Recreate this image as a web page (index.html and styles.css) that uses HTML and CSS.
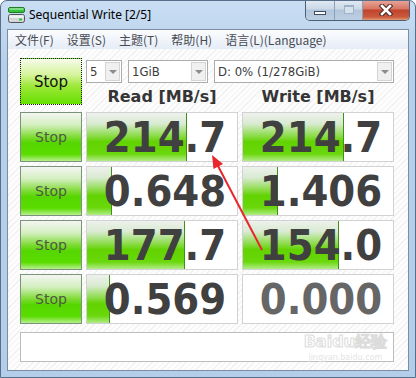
FILE: index.html
```html
<!DOCTYPE html>
<html lang="zh">
<head>
    <meta charset="UTF-8">
    <title>Sequential Write [2/5]</title>
    <link rel="stylesheet" href="styles.css">
</head>
<body>
    <div class="window">
        <div class="titlebar">
            <svg class="app-icon" width="17" height="16" viewBox="0 0 17 16">
                <rect x="0.5" y="0.5" width="16" height="5" rx="1.5" fill="#38c23c" stroke="#1f7d24"/>
                <rect x="1.5" y="1.2" width="14" height="1.6" fill="#8fe59a"/>
                <rect x="0.5" y="7.5" width="16" height="8" rx="2" fill="#d4d6d8" stroke="#4d5257"/>
                <rect x="1.5" y="8.3" width="14" height="2.5" fill="#f2f3f4"/>
                <rect x="11" y="11.5" width="3" height="2" fill="#2fc235"/>
            </svg>
            <span class="title">Sequential Write [2/5]</span>
            <div class="caption-buttons">
                <span class="cap cap-min"><i></i></span>
                <span class="cap cap-max"><i></i></span>
                <span class="cap cap-close">
                    <svg width="14" height="12" viewBox="0 0 14 12">
                        <path d="M3 2 L11 10 M11 2 L3 10" stroke="#4a2a26" stroke-width="4.6" stroke-linecap="square"/>
                        <path d="M3 2 L11 10 M11 2 L3 10" stroke="#fff" stroke-width="2.6" stroke-linecap="square"/>
                    </svg>
                </span>
            </div>
        </div>

        <div class="frame-inner">
            <div class="menubar">
                <span>文件(F)</span>
                <span>设置(S)</span>
                <span>主题(T)</span>
                <span>帮助(H)</span>
                <span>语言(L)(Language)</span>
            </div>

            <div class="client">
                <div class="board">
                    <button class="stop stop-main">Stop</button>
                    <div class="controls">
                        <div class="selects">
                            <div class="select sel-count"><span>5</span><i class="drop"></i></div>
                            <div class="select sel-size"><span>1GiB</span><i class="drop"></i></div>
                            <div class="select sel-drive"><span>D: 0% (1/278GiB)</span><i class="drop"></i></div>
                        </div>
                        <div class="heads">
                            <span>Read [MB/s]</span>
                            <span>Write [MB/s]</span>
                        </div>
                    </div>

                    <button class="stop">Stop</button>
                    <div class="meter"><div class="bar" style="width: 99px"></div><span class="value">214.7</span></div>
                    <div class="meter"><div class="bar" style="width: 100px"></div><span class="value">214.7</span></div>

                    <button class="stop">Stop</button>
                    <div class="meter"><div class="bar" style="width: 24px"></div><span class="value">0.648</span></div>
                    <div class="meter"><div class="bar" style="width: 34px"></div><span class="value">1.406</span></div>

                    <button class="stop">Stop</button>
                    <div class="meter"><div class="bar" style="width: 97px"></div><span class="value">177.7</span></div>
                    <div class="meter"><div class="bar" style="width: 95px"></div><span class="value">154.0</span></div>

                    <button class="stop">Stop</button>
                    <div class="meter"><div class="bar" style="width: 22px"></div><span class="value">0.569</span></div>
                    <div class="meter"><span class="value zero">0.000</span></div>
                </div>

                <div class="comment">
                    <div class="watermark">
                        <span class="wm-logo">Baidu经验</span>
                        <span class="wm-url">jingyan.baidu.com</span>
                    </div>
                </div>
            </div>
        </div>

        <!-- 紅色標註箭頭 -->
        <svg class="annotation" width="416" height="378" viewBox="0 0 416 378">
            <line x1="262" y1="250" x2="218" y2="166" stroke="#e8262b" stroke-width="2"/>
            <polygon points="212,155 223,164 213.5,169" fill="#e8262b"/>
        </svg>
    </div>
</body>
</html>
```

FILE: styles.css
```css
body {
    margin: 0;
    background: #fff;
    font-family: "DejaVu Sans", sans-serif;
}
.window {
    position: relative;
    width: 416px;
    height: 378px;
    box-sizing: border-box;
    border: 1px solid #566f8b;
    border-radius: 7px 7px 0 0;
    padding: 0 6px 6px;
    background: linear-gradient(#c9def3, #b7d0ea 60px, #b4cde8);
    display: flex;
    flex-direction: column;
    overflow: hidden;
}
.titlebar {
    height: 28px;
    display: flex;
    align-items: flex-start;
}
.app-icon {
    margin: 6px 0 0 1px;
}
.title {
    margin: 6px 0 0 4px;
    font-family: "Noto Sans", sans-serif;
    font-size: 12px;
    line-height: 16px;
    color: #000;
}
.caption-buttons {
    margin: -1px -1px 0 auto;
    display: flex;
    height: 20px;
    border: 1px solid #4c5f78;
    border-top: none;
    border-radius: 0 0 5px 5px;
    overflow: hidden;
}
.cap {
    display: flex;
    align-items: center;
    justify-content: center;
    height: 100%;
}
.cap-min, .cap-max {
    width: 27px;
    background: linear-gradient(#e3ebf4, #cbd8e7 45%, #b3c5da 50%, #bccfe3);
    border-right: 1px solid #8ca0b8;
}
.cap-min {
    width: 28px;
}
.cap-min i {
    display: block;
    width: 10px;
    height: 2px;
    margin-top: 6px;
    background: #fff;
    border: 1px solid #3d4c60;
}
.cap-max i {
    display: block;
    width: 8px;
    height: 6px;
    margin-top: -1px;
    border: 1px solid #9fb2c8;
    border-top-width: 2px;
    background: #d6e1ee;
}
.cap-close {
    width: 46px;
    background: linear-gradient(#e9a99c, #d77563 45%, #c1432c 50%, #c95a3d 85%, #e49a6f);
}
.frame-inner {
    flex: 1;
    display: flex;
    flex-direction: column;
    border: 1px solid #7b8ea5;
    background: #fff;
}
.menubar {
    height: 19px;
    display: flex;
    align-items: center;
    gap: 13px;
    padding-left: 7px;
    background: linear-gradient(#fbfcfe, #e6edf7);
    font-family: "Noto Sans CJK SC", sans-serif;
    font-size: 12px;
    color: #484b52;
}
.client {
    flex: 1;
    padding: 9px 0 0 12px;
    background: repeating-linear-gradient(135deg, #fdfdfd 0 3px, #f1f1f1 3px 4px);
}
.board {
    display: grid;
    grid-template-columns: 62px 152px 152px;
    grid-auto-rows: 50px;
    gap: 4px;
}
.stop {
    padding: 0;
    margin: 0;
    border: 1px solid #7a937a;
    background: linear-gradient(#f4f6f2, #d4efc0 25%, #7edb34 50%, #55d600 62%, #5bdc00 86%, #b6f08e);
    font-family: "DejaVu Sans", sans-serif;
    font-size: 14px;
    color: #4d5c41;
    cursor: pointer;
}
.stop-main {
    height: 47px;
    border: 1px dotted #1a1a1a;
    background: linear-gradient(#f7fbec, #d6f49c 35%, #9ee83a 60%, #66e000);
    color: #111;
    font-size: 15px;
}
.controls {
    grid-column: 2 / 4;
}
.selects {
    display: flex;
    gap: 6px;
    margin-top: 2px;
}
.select {
    height: 23px;
    box-sizing: border-box;
    display: flex;
    align-items: center;
    justify-content: space-between;
    border: 1px solid #acacac;
    background: #fff;
    font-family: "DejaVu Sans Condensed", "DejaVu Sans", sans-serif;
    font-stretch: condensed;
    font-size: 13px;
    color: #3c3c3c;
    padding-left: 3px;
}
.sel-count { width: 36px; }
.sel-size { width: 80px; }
.sel-drive { width: 180px; }
.drop {
    position: relative;
    width: 15px;
    height: 19px;
    margin-right: 1px;
    box-sizing: border-box;
    border: 1px solid #d4d4d4;
    background: #f0f0f0;
}
.drop::after {
    content: "";
    position: absolute;
    left: 3px;
    top: 7px;
    border-left: 4px solid transparent;
    border-right: 4px solid transparent;
    border-top: 4px solid #8c8c8c;
}
.heads {
    display: grid;
    grid-template-columns: 152px 152px;
    gap: 4px;
    margin-top: 4px;
    height: 20px;
    line-height: 20px;
    text-align: center;
    font-weight: bold;
    font-size: 16px;
    color: #353535;
}
.meter {
    position: relative;
    box-sizing: border-box;
    border: 1px solid #d2d2d2;
    background: #fff;
    overflow: hidden;
}
.bar {
    position: absolute;
    left: 0;
    top: 0;
    bottom: 0;
    border-right: 1px solid #3f8f1d;
    background: linear-gradient(#eef1ec, #d9ebd2 22%, #8ddc4c 47%, #62d200 60%, #6ad80c 85%, #b2ec88);
}
.value {
    position: relative;
    display: block;
    padding-left: 6px;
    text-align: center;
    line-height: 48px;
    font-family: "DejaVu Sans Condensed", "DejaVu Sans", sans-serif;
    font-stretch: condensed;
    font-weight: bold;
    font-size: 43px;
    color: #404040;
}
.value.zero {
    color: #666;
}
.comment {
    position: relative;
    width: 374px;
    height: 30px;
    margin-top: 8px;
    box-sizing: border-box;
    border: 1px solid #bdbdbd;
    background: #fff;
}
.watermark {
    position: absolute;
    right: 6px;
    top: 0;
    display: flex;
    flex-direction: column;
    align-items: center;
    gap: 2px;
}
.wm-logo {
    font-family: "DejaVu Sans", sans-serif;
    font-weight: bold;
    font-size: 16px;
    line-height: 18px;
    color: #fff;
    -webkit-text-stroke: 1px #dcdcdc;
}
.wm-url {
    font-size: 8px;
    line-height: 9px;
    color: #e4e4e4;
}
.annotation {
    position: absolute;
    left: -1px;
    top: -1px;
    pointer-events: none;
}
```
